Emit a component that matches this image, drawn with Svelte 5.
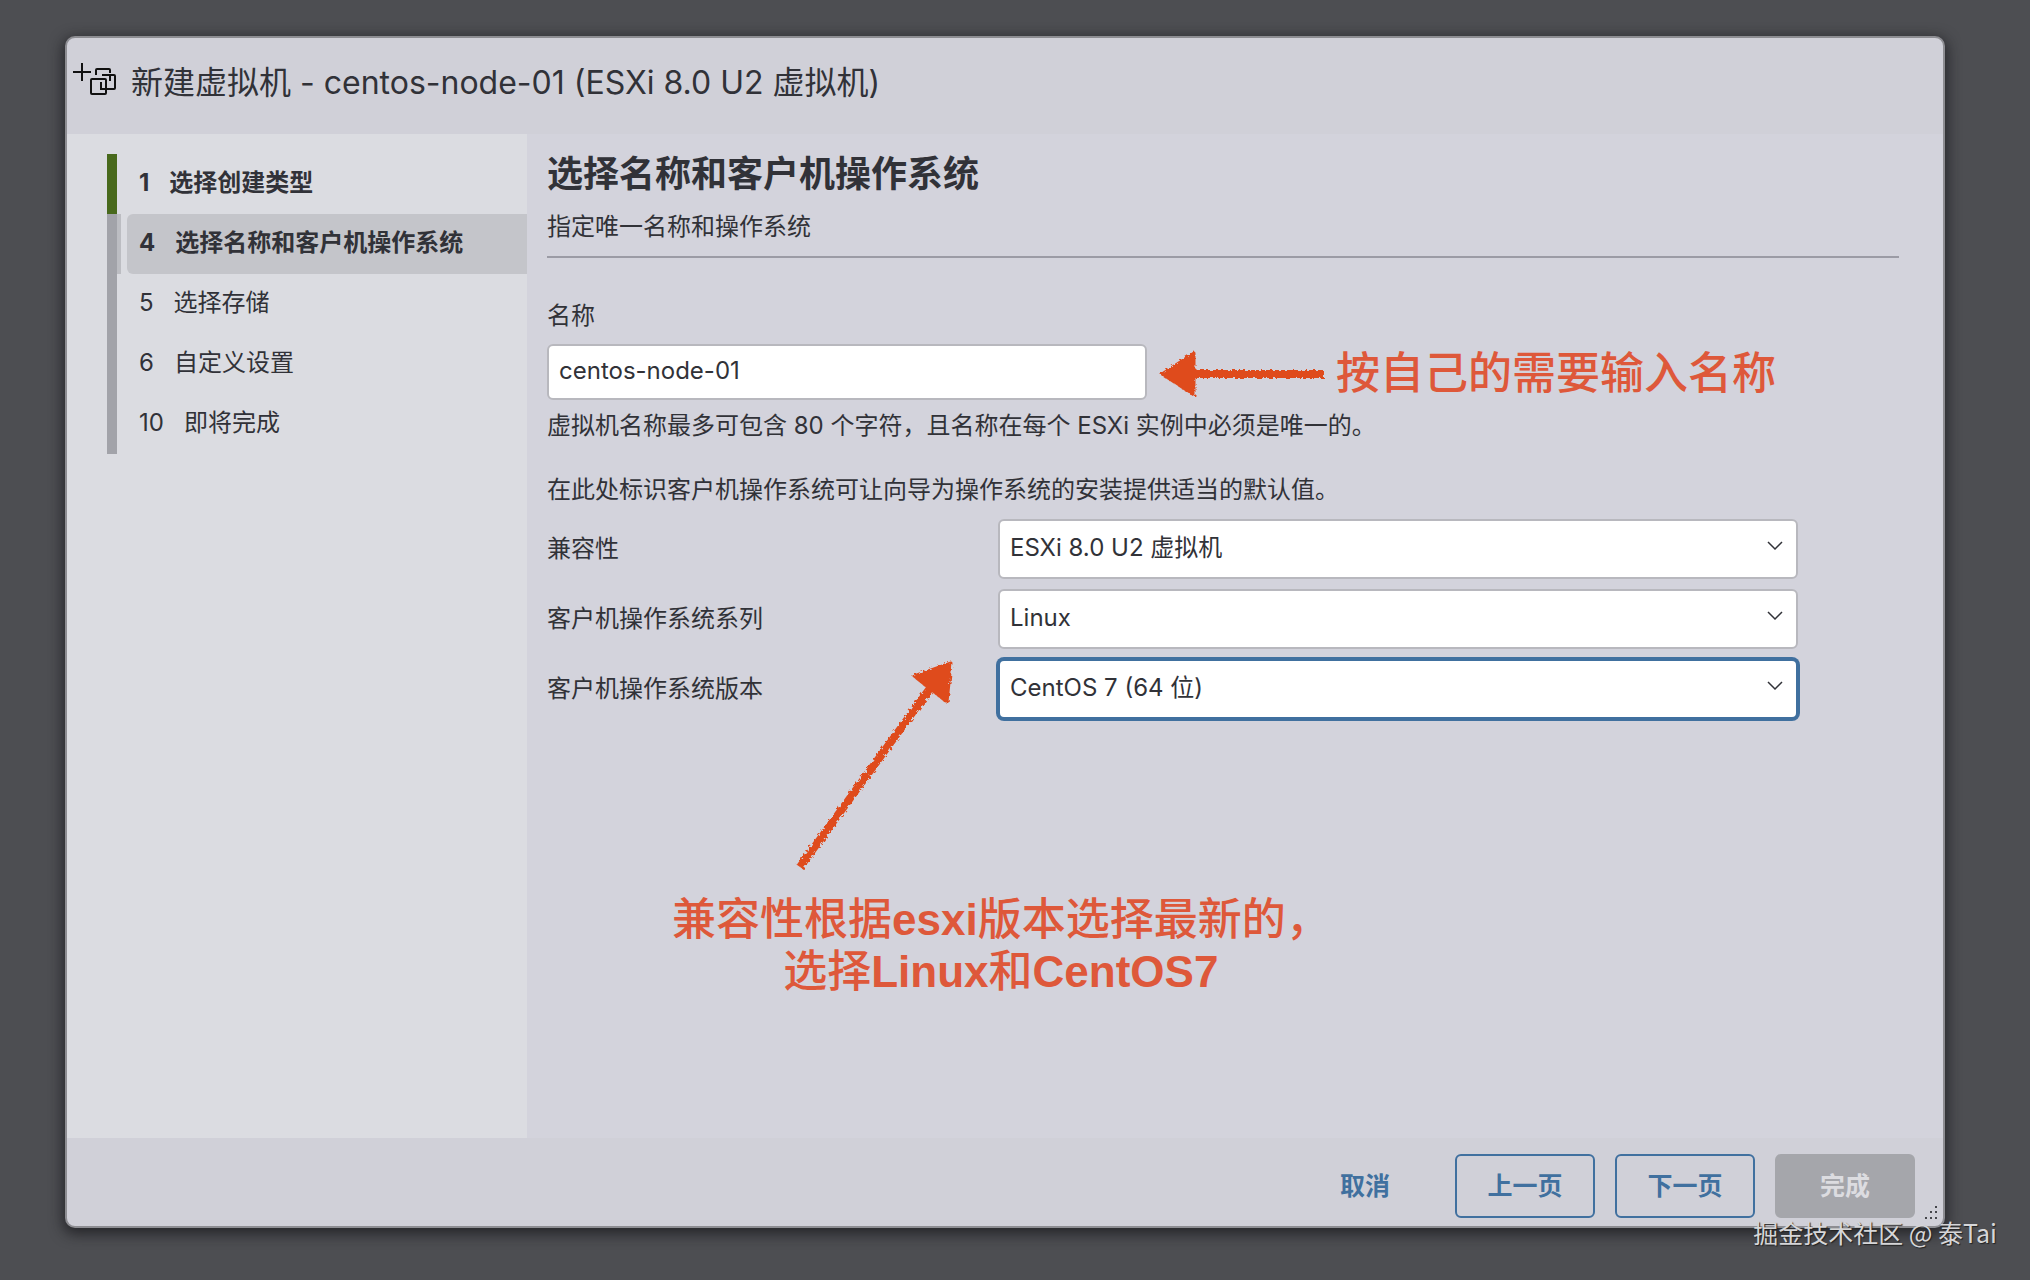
<script>
    let name = 'centos-node-01'

    const steps = [
        { number: 1, title: '选择创建类型', state: 'done' },
        { number: 4, title: '选择名称和客户机操作系统', state: 'active' },
        { number: 5, title: '选择存储', state: '' },
        { number: 6, title: '自定义设置', state: '' },
        { number: 10, title: '即将完成', state: '' },
    ]

    const fields = [
        { id: 'compat', label: '兼容性', value: 'ESXi 8.0 U2 虚拟机' },
        { id: 'family', label: '客户机操作系统系列', value: 'Linux' },
        { id: 'version', label: '客户机操作系统版本', value: 'CentOS 7 (64 位)', focused: true },
    ]
</script>


<div class="backdrop">
    <div class="dialog" role="dialog" aria-labelledby="dialog-title">
        <header>
            <svg class="vm-icon" width="44" height="40" viewBox="0 0 44 40" aria-hidden="true">
                <path d="M0 9h18M9 0v18" />
                <path d="M23 12V7q0-1 1-1h12q1 0 1 1v3" />
                <path d="M29 12h12q1 0 1 1v12q0 1-1 1H28v-7M37 12v6" />
                <rect x="18" y="16" width="15" height="15" rx="1" />
            </svg>
            <h1 id="dialog-title">新建虚拟机 - centos-node-01 (ESXi 8.0 U2 虚拟机)</h1>
        </header>

        <div class="body">
            <nav>
                <ol>
                    {#each steps as step}
                        <li class={step.state}>
                            <a href="#step-{step.number}"><span>{step.number}</span>{step.title}</a>
                        </li>
                    {/each}
                </ol>
            </nav>

            <main>
                <h2>选择名称和客户机操作系统</h2>
                <p class="subtitle">指定唯一名称和操作系统</p>

                <label for="vm-name">名称</label>
                <input id="vm-name" type="text" bind:value={name} />
                <p class="hint">虚拟机名称最多可包含 80 个字符，且名称在每个 ESXi 实例中必须是唯一的。</p>
                <p class="intro">在此处标识客户机操作系统可让向导为操作系统的安装提供适当的默认值。</p>

                {#each fields as field}
                    <div class="field">
                        <label for={field.id}>{field.label}</label>
                        <div class="select" class:focused={field.focused}>
                            <select id={field.id}>
                                <option>{field.value}</option>
                            </select>
                            <svg width="16" height="10" viewBox="0 0 16 10" aria-hidden="true">
                                <path d="M1 1l7 7 7-7" />
                            </svg>
                        </div>
                    </div>
                {/each}

                <!-- Hand-drawn notes over the form -->
                <svg class="arrow arrow-name" width="170" height="50" viewBox="0 0 170 50" aria-hidden="true">
                    <filter id="crayon" x="-5%" y="-10%" width="110%" height="120%">
                        <feTurbulence type="fractalNoise" baseFrequency="0.35" numOctaves="2" seed="4" />
                        <feDisplacementMap in="SourceGraphic" scale="5" />
                    </filter>
                    <g filter="url(#crayon)">
                        <path class="shaft" d="M34 25h130" />
                        <path class="head" d="M3 25L35 4v42z" />
                    </g>
                </svg>
                <p class="note note-name">按自己的需要输入名称</p>

                <svg class="arrow arrow-os" width="170" height="220" viewBox="0 0 170 220" aria-hidden="true">
                    <g filter="url(#crayon)">
                        <path class="shaft" d="M12 213L148 26" />
                        <path class="head" d="M163 9l-37 13 33 26z" />
                    </g>
                </svg>
                <p class="note note-os">兼容性根据<b>esxi</b>版本选择最新的，<br />选择<b>Linux</b>和<b>CentOS7</b></p>
            </main>
        </div>

        <footer>
            <button class="link">取消</button>
            <button>上一页</button>
            <button>下一页</button>
            <button class="finish" disabled>完成</button>
        </footer>

        <svg class="grip" width="16" height="16" viewBox="0 0 16 16" aria-hidden="true">
            <path d="M12 1h2v2h-2zM7 6h2v2H7zM12 6h2v2h-2zM2 12h2v2H2zM7 12h2v2H7zM12 12h2v2h-2z" />
        </svg>
    </div>

    <div class="watermark">掘金技术社区 @ 泰Tai</div>
</div>


<style>
    :global(body) {
        margin: 0;
        background-color: #4d4e52;
    }

    .backdrop {
        --text: #313238;
        --blue: #40709f;
        --font: 'Inter', 'Noto Sans CJK SC', sans-serif;
        display: flex;
        position: relative;
        box-sizing: border-box;
        min-height: 100vh;
        padding: 36px 85px 52px 65px;
        font-family: var(--font);
        font-size: 24px;
        line-height: 36px;
        color: var(--text);
    }

    .dialog {
        display: flex;
        flex: 1;
        flex-direction: column;
        position: relative;
        border: 2px solid #8d8d92;
        border-radius: 10px;
        background-color: #d0d0d8;
        box-shadow: 0 4px 14px 2px rgba(20, 20, 24, 0.7);
    }

    header {
        display: flex;
        align-items: center;
        gap: 14px;
        box-sizing: border-box;
        height: 96px;
        padding: 0 6px 6px;
    }

    .vm-icon {
        fill: none;
        stroke: #111;
        stroke-width: 2;
    }

    h1 {
        margin: 0;
        font-size: 32px;
        font-weight: 400;
        line-height: 48px;
    }

    .body {
        display: flex;
        flex: 1;
    }

    nav {
        flex: none;
        box-sizing: border-box;
        width: 460px;
        padding: 20px 0 0 40px;
        background-color: #dbdce1;
    }

    ol {
        margin: 0;
        padding: 0;
        list-style: none;
    }

    li {
        border-left: 10px solid #a2a3a9;
    }

    li a {
        display: block;
        margin-left: 10px;
        padding: 11px 12px 13px;
        color: inherit;
        text-decoration: none;
    }

    li span {
        margin-right: 20px;
    }

    li.done {
        border-color: #48691c;
        font-weight: 700;
    }

    li.active {
        background: linear-gradient(#bcbdc2, #bcbdc2) no-repeat 0 0 / 4px 100%;
        font-weight: 700;
    }

    li.active a {
        border-radius: 6px 0 0 6px;
        background-color: #c4c5ca;
    }

    main {
        flex: 1;
        position: relative;
        padding: 12px 44px 0 20px;
        background-color: #d3d3dc;
    }

    h2 {
        margin: 0;
        font-size: 36px;
        font-weight: 700;
        line-height: 56px;
    }

    p {
        margin: 0;
    }

    .subtitle {
        margin: 7px 0 40px;
        padding-bottom: 11px;
        border-bottom: 2px solid #9b9ba5;
    }

    label {
        display: block;
    }

    input {
        display: block;
        box-sizing: border-box;
        width: 600px;
        height: 56px;
        margin: 10px 0 8px;
        padding: 0 10px 4px;
        border: 2px solid #b8b8be;
        border-radius: 6px;
        background-color: #fff;
        color: inherit;
        font: inherit;
        outline: none;
    }

    .hint {
        margin-bottom: 28px;
    }

    .intro {
        margin-bottom: 11px;
    }

    .field {
        display: flex;
        align-items: center;
        height: 60px;
        margin-bottom: 10px;
    }

    .field label {
        flex: 0 0 451px;
    }

    .select {
        display: grid;
        flex: 0 1 800px;
        align-items: center;
        box-sizing: border-box;
        height: 60px;
        border: 2px solid #b8b8be;
        border-radius: 6px;
        background-color: #fff;
    }

    .select.focused {
        border-color: var(--blue);
        box-shadow: 0 0 0 2px var(--blue);
    }

    .select select,
    .select svg {
        grid-area: 1 / 1;
    }

    .select select {
        height: 56px;
        padding: 0 40px 2px 10px;
        border: 0;
        background: none;
        color: inherit;
        font: inherit;
        appearance: none;
        outline: none;
    }

    .select svg {
        justify-self: end;
        margin: 0 13px 6px 0;
        fill: none;
        stroke: var(--text);
        stroke-width: 1.5;
        pointer-events: none;
    }

    .arrow,
    .note {
        position: absolute;
        pointer-events: none;
    }

    .arrow .shaft {
        fill: none;
        stroke: #df4c1f;
        stroke-width: 8;
    }

    .arrow .head {
        fill: #df4c1f;
        stroke: #df4c1f;
        stroke-width: 3;
        stroke-linejoin: round;
    }

    .note {
        color: #de583a;
        font-family: 'Liberation Sans', 'Noto Sans CJK SC', sans-serif;
        font-size: 44px;
        font-weight: 500;
        line-height: 52px;
        text-align: center;
        white-space: nowrap;
    }

    .note b {
        font-weight: 700;
    }

    .arrow-name {
        top: 215px;
        left: 632px;
    }

    .note-name {
        top: 214px;
        left: 809px;
    }

    .arrow-os {
        top: 520px;
        left: 261px;
    }

    .note-os {
        top: 760px;
        left: 145px;
    }

    footer {
        display: flex;
        align-items: center;
        justify-content: flex-end;
        gap: 20px;
        box-sizing: border-box;
        height: 88px;
        padding: 8px 28px 0 0;
    }

    button {
        width: 140px;
        height: 64px;
        padding: 0 0 4px;
        border: 2px solid var(--blue);
        border-radius: 6px;
        background: none;
        color: var(--blue);
        font: 600 25px var(--font);
    }

    button.link {
        border-color: transparent;
    }

    button.finish {
        border-color: #a5a6ab;
        background-color: #a5a6ab;
        color: #dcdce0;
    }

    .grip {
        position: absolute;
        right: 4px;
        bottom: 5px;
        fill: #45464b;
    }

    .watermark {
        position: absolute;
        right: 33px;
        bottom: 30px;
        color: #d6d6d8;
        font-family: 'Noto Sans CJK SC', sans-serif;
        font-size: 25px;
        text-shadow: 1px 1px 1px #222;
    }
</style>
